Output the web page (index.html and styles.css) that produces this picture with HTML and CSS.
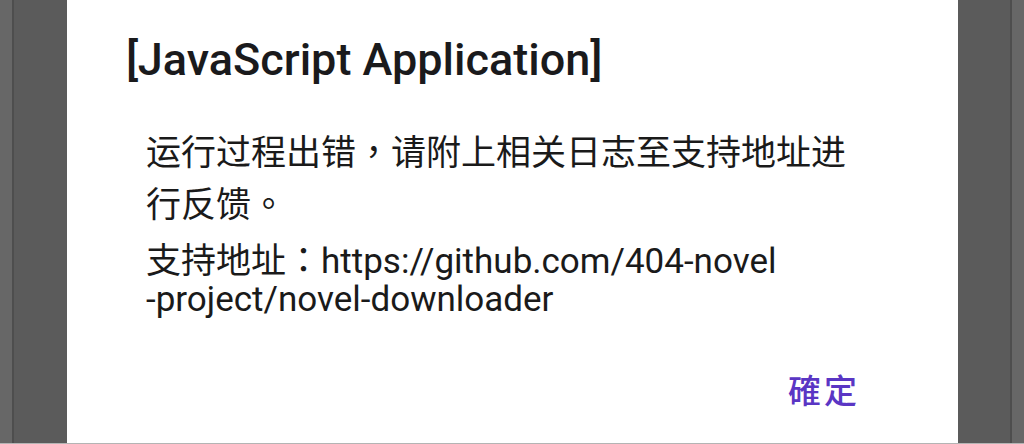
FILE: index.html
```html
<!DOCTYPE html>
<html lang="zh-CN">
<head>
  <meta charset="UTF-8">
  <meta name="viewport" content="width=device-width, initial-scale=1.0">
  <title>JavaScript Application</title>
  <link rel="stylesheet" href="styles.css">
</head>
<body>
  <div class="screen">
    <div class="edge"></div>
    <div class="edge-line"></div>
    <div class="shade"></div>
    <div class="dialog">
      <h1 class="title">[JavaScript Application]</h1>
      <div class="message">
        <p class="line">运行过程出错<span class="punct" lang="zh-TW">，</span>请附上相关日志至支持地址进</p>
        <p class="line">行反馈<span class="punct" lang="zh-TW">。</span></p>
        <p class="address">支持地址<span class="punct" lang="zh-TW">：</span>https://github.com/404-novel<br>-project/novel-downloader</p>
      </div>
      <div class="actions">
        <button class="ok-btn" lang="zh-TW">確定</button>
      </div>
    </div>
    <div class="shade"></div>
    <div class="edge-line"></div>
    <div class="edge"></div>
  </div>
</body>
</html>
```

FILE: styles.css
```css
body {
  margin: 0;
  padding: 0;
  background-color: #5b5b5b;
  font-family: Roboto, "Noto Sans CJK SC", sans-serif;
}
.screen {
  display: grid;
  grid-template-columns: 12px 2px 53px 891px 52px 2px 12px;
  height: 444px;
  border-bottom: 1px solid #b4b4b4;
  box-sizing: border-box;
}
.edge {
  background-color: #676767;
}
.edge-line {
  background-color: #4e4e4e;
}
.shade {
  background-color: #5b5b5b;
}
.dialog {
  background-color: #fff;
  display: flex;
  flex-direction: column;
}
.title {
  margin: 34px 0 0 59px;
  font-size: 45px;
  font-weight: 500;
  color: #1a1a1c;
  line-height: 52px;
}
.message {
  margin: 42px 0 0 79px;
  color: #1a1a1a;
  font-size: 35px;
}
.line {
  margin: 0;
  line-height: 52px;
  white-space: nowrap;
}
.address {
  margin: 8px 0 0;
  line-height: 38px;
  white-space: nowrap;
}
.punct {
  font-family: "Noto Sans CJK TC", sans-serif;
  line-height: 1;
}
.actions {
  margin-top: auto;
  padding: 0 98px 30px 0;
  display: flex;
  justify-content: flex-end;
}
.ok-btn {
  background: none;
  border: none;
  padding: 0;
  font-family: "Noto Sans CJK TC", sans-serif;
  font-size: 33px;
  font-weight: 500;
  letter-spacing: 3px;
  color: #5a36c4;
  cursor: pointer;
}
```
